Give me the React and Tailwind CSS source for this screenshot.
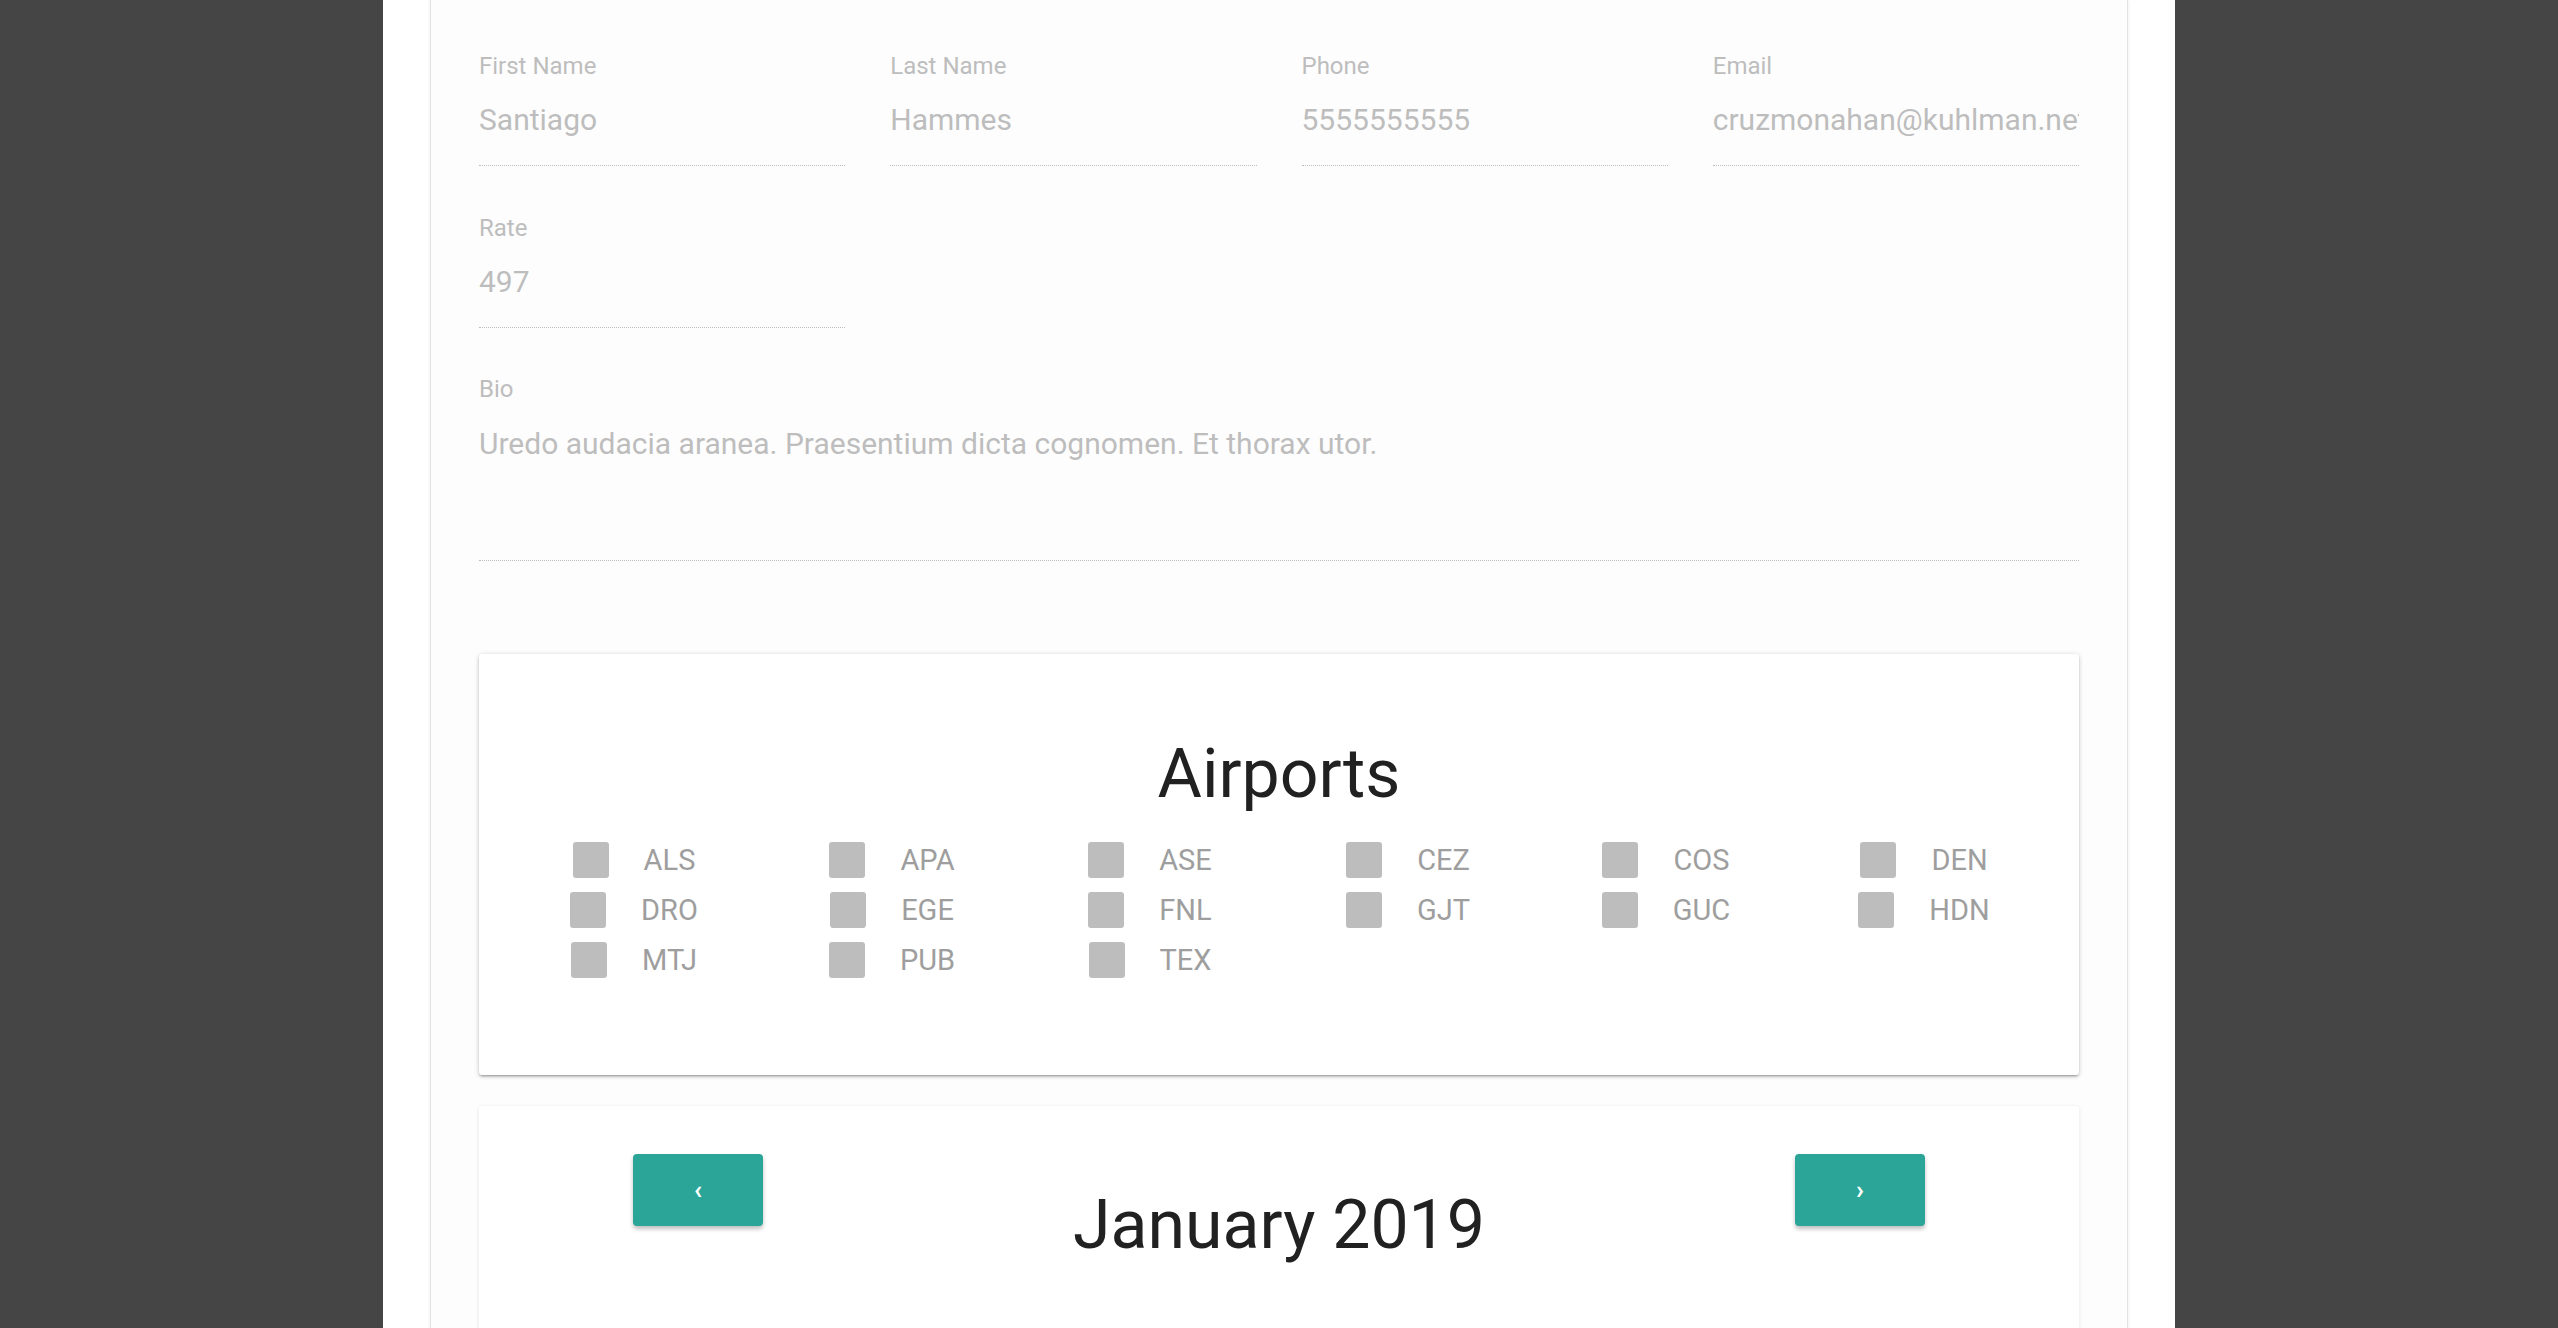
import React from 'react';

const FIELDS = [
    { label: 'First Name', value: 'Santiago' },
    { label: 'Last Name', value: 'Hammes' },
    { label: 'Phone', value: '5555555555' },
    { label: 'Email', value: 'cruzmonahan@kuhlman.net' },
    { label: 'Rate', value: '497' },
];

const AIRPORTS = [
    'ALS', 'APA', 'ASE', 'CEZ', 'COS', 'DEN',
    'DRO', 'EGE', 'FNL', 'GJT', 'GUC', 'HDN',
    'MTJ', 'PUB', 'TEX',
];

function Field({ label, value }) {
    return (
        <div className="border-b border-dotted border-[#bdbdbd] pb-[27px]">
            <label className="block text-[24px] leading-[24px] text-[#bdbdbd]">{label}</label>
            <input
                readOnly
                value={value}
                className="mt-[24px] block h-[36px] w-full bg-transparent p-0 text-[30px] leading-[36px] text-[#bdbdbd] outline-none"
            />
        </div>
    );
}

export default function App() {
    return (
        <div className="min-h-screen bg-[#454545] font-['Roboto','Liberation_Sans',sans-serif]">
            <div className="mx-auto min-h-screen w-[1792px] bg-white">
                <div className="mx-[47px] min-h-screen border-x border-[#e2e2e2] bg-[#fdfdfd] px-[48px] pt-[54px] shadow-[0_0_4px_rgba(0,0,0,0.08)]">

                    {/* Form fields */}
                    <div className="grid grid-cols-4 gap-x-[45px] gap-y-[50px]">
                        {FIELDS.map((f) => (
                            <Field key={f.label} label={f.label} value={f.value} />
                        ))}
                    </div>

                    {/* Bio */}
                    <div className="mt-[49px] border-b border-dotted border-[#bdbdbd] pb-[98px]">
                        <label className="block text-[24px] leading-[24px] text-[#bdbdbd]">Bio</label>
                        <p className="mt-[25px] text-[30px] leading-[36px] text-[#bdbdbd]">
                            Uredo audacia aranea. Praesentium dicta cognomen. Et thorax utor.
                        </p>
                    </div>

                    {/* Airports card */}
                    <div className="mt-[93px] rounded-[3px] bg-white px-[26px] pb-[97px] pt-[80px] shadow-[0_2px_2px_0_rgba(0,0,0,0.14),0_3px_1px_-2px_rgba(0,0,0,0.12),0_1px_5px_0_rgba(0,0,0,0.2)]">
                        <h2 className="text-center text-[68px] leading-[80px] font-normal text-[#212121]">Airports</h2>
                        <div className="mt-[28px] grid grid-cols-6 gap-y-[14px]">
                            {AIRPORTS.map((code) => (
                                <label key={code} className="flex items-center justify-center gap-[35px]">
                                    <span className="h-[36px] w-[36px] rounded-[3px] bg-[#bdbdbd]" />
                                    <span className="text-[29px] leading-[36px] text-[#9e9e9e]">{code}</span>
                                </label>
                            ))}
                        </div>
                    </div>

                    {/* Calendar card */}
                    <div className="mt-[31px] min-h-[420px] rounded-[3px] bg-white px-[154px] pt-[48px] shadow-[0_1px_4px_0_rgba(0,0,0,0.1)]">
                        <div className="flex items-start justify-between">
                            <button className="flex h-[72px] w-[130px] items-center justify-center rounded-[4px] bg-[#2ba597] text-[26px] font-bold text-white shadow-[0_3px_4px_rgba(0,0,0,0.25)]">
                                ‹
                            </button>
                            <h2 className="mt-[31px] text-[68px] leading-[80px] font-normal text-[#212121]">January 2019</h2>
                            <button className="flex h-[72px] w-[130px] items-center justify-center rounded-[4px] bg-[#2ba597] text-[26px] font-bold text-white shadow-[0_3px_4px_rgba(0,0,0,0.25)]">
                                ›
                            </button>
                        </div>
                    </div>

                </div>
            </div>
        </div>
    );
}
